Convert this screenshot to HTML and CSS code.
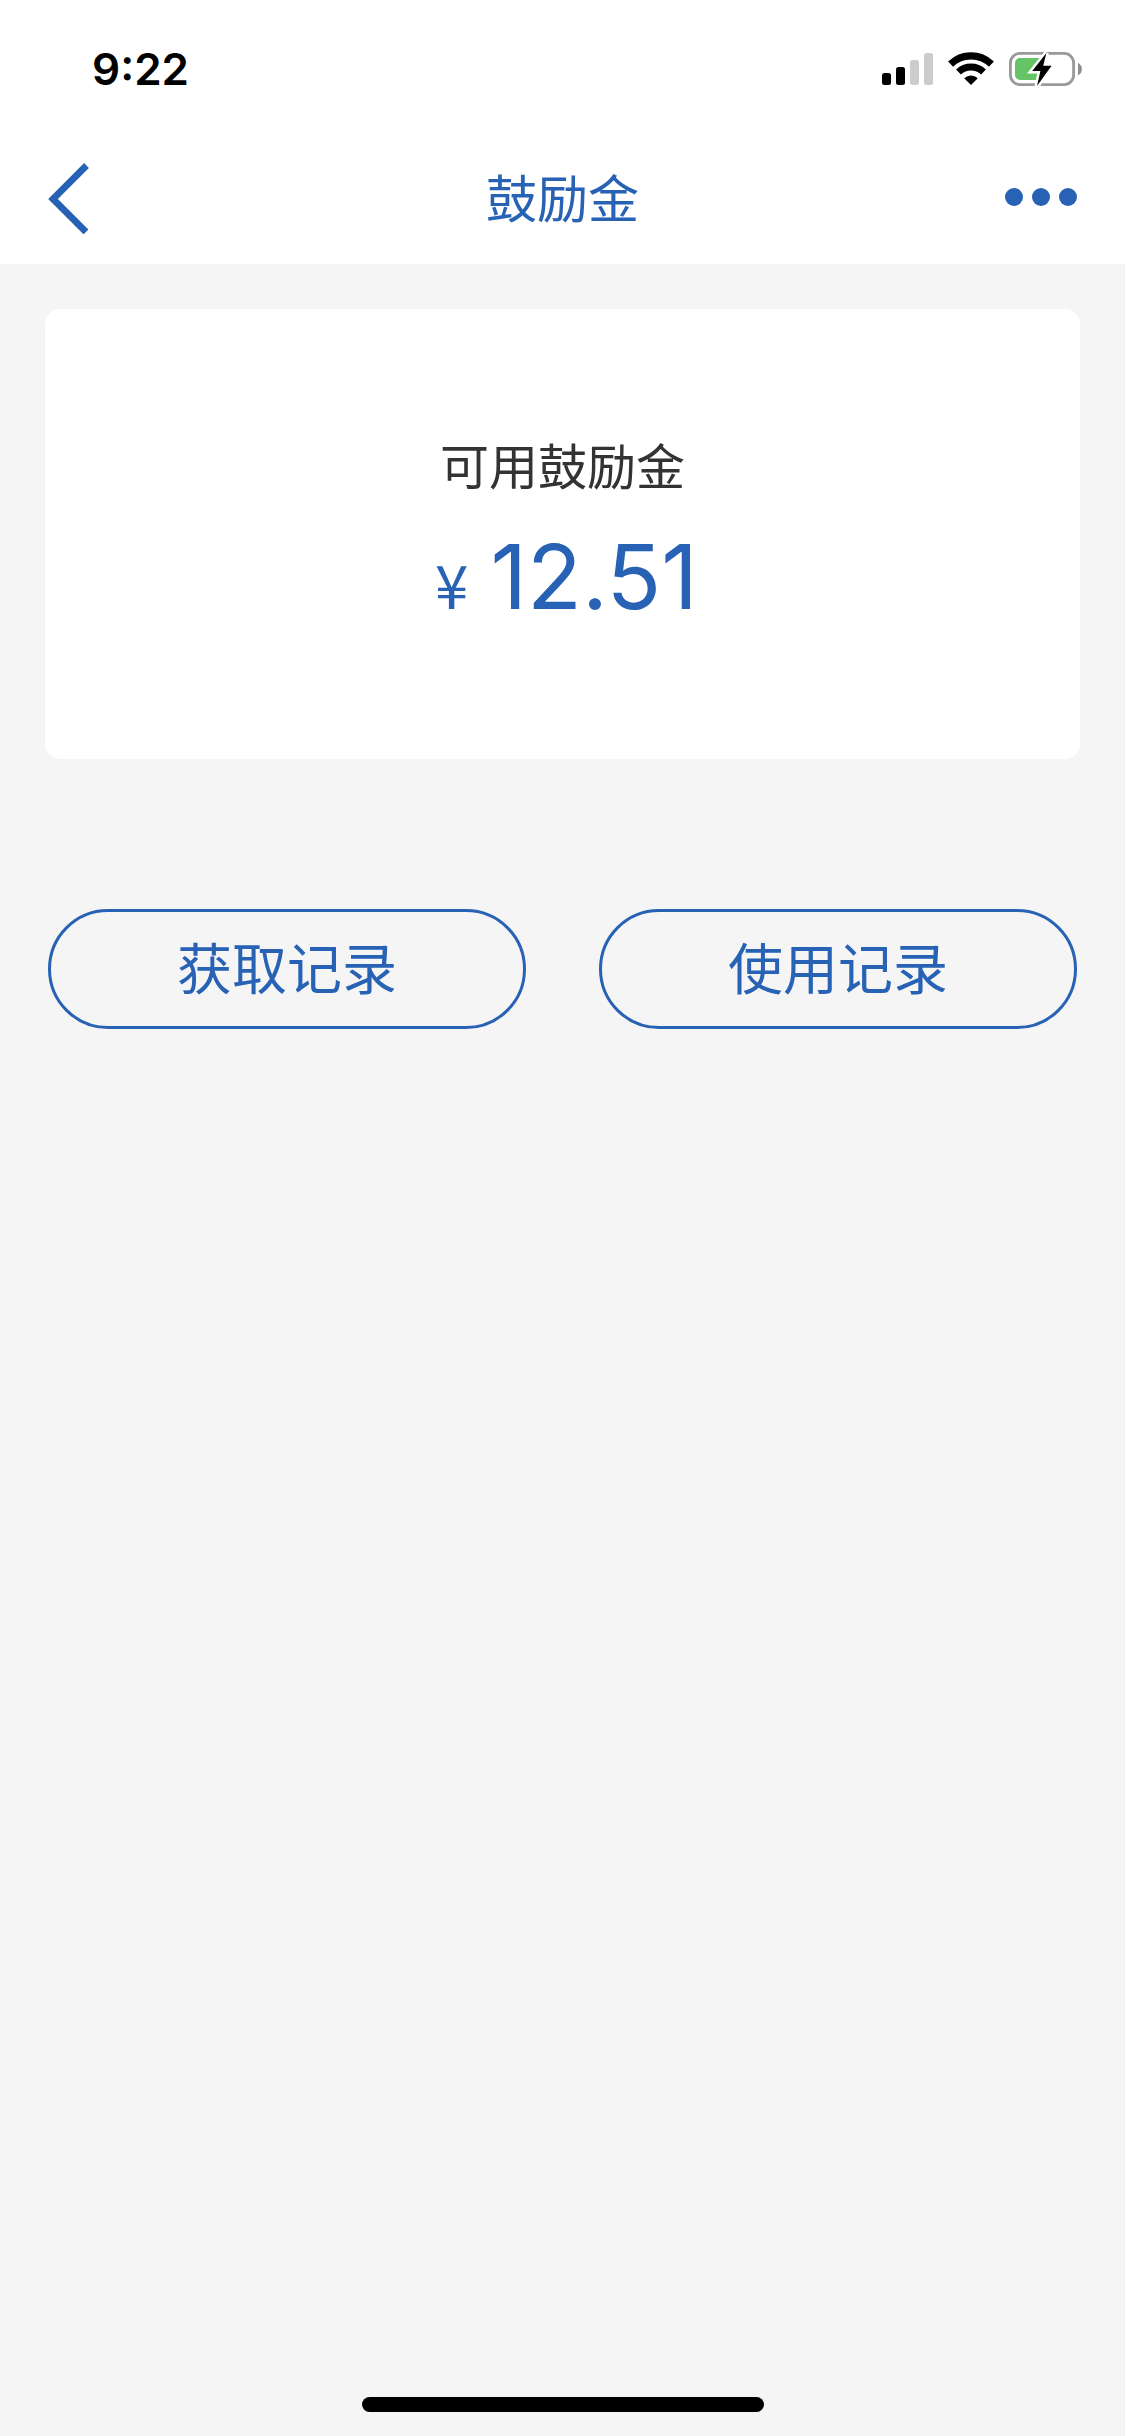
FILE: index.html
```html
<!DOCTYPE html>
<html lang="zh-CN">
<head>
    <meta charset="UTF-8">
    <meta name="viewport" content="width=device-width, initial-scale=1.0">
    <title>鼓励金</title>
    <link rel="stylesheet" href="styles.css">
</head>
<body>
    <div class="status-bar">
        <span class="time">9:22</span>
        <div class="status-icons">
            <svg width="51" height="34" viewBox="0 0 51 34" aria-hidden="true">
                <rect x="0" y="21" width="9" height="12" rx="2.5"/>
                <rect x="14" y="15" width="9" height="18" rx="2.5"/>
                <rect x="28" y="8" width="9" height="25" rx="2.5" fill="#ccc"/>
                <rect x="42" y="1" width="9" height="32" rx="2.5" fill="#ccc"/>
            </svg>
            <svg width="46" height="34" viewBox="0 0 46 34" aria-hidden="true">
                <path d="M2.6 12.1a29.2 29.2 0 0 1 40.8 0" fill="none" stroke="#000" stroke-width="7.2"/>
                <path d="M10.5 20a18.2 18.2 0 0 1 25 0" fill="none" stroke="#000" stroke-width="7"/>
                <path d="M23 33l-6.8-6.8a10.2 10.2 0 0 1 13.6 0z"/>
            </svg>
            <svg width="73" height="34" viewBox="0 0 73 34" aria-hidden="true">
                <path d="M11 6h22v22H11a5 5 0 0 1-5-5V11a5 5 0 0 1 5-5z" fill="#65c466"/>
                <rect x="1.4" y="1.4" width="63.2" height="31.2" rx="9.5" fill="none" stroke="#999" stroke-width="2.8"/>
                <path d="M37.4 1L23.2 19h8.2L28 34l14.6-20.3h-8.4z" stroke="#fff" stroke-width="5"/>
                <path d="M37.4 1L23.2 19h8.2L28 34l14.6-20.3h-8.4z"/>
                <path d="M69 10.7c5.2 2.4 5.2 10.2 0 12.6z" fill="#8e8e8e"/>
            </svg>
        </div>
    </div>

    <header class="navbar">
        <button type="button" class="nav-btn" aria-label="返回">
            <svg width="42" height="72" viewBox="0 0 42 72" aria-hidden="true">
                <path d="M38.5 3.5L5 37l33 33" fill="none" stroke="currentColor" stroke-width="6.8"/>
            </svg>
        </button>
        <h1>鼓励金</h1>
        <button type="button" class="nav-btn more" aria-label="更多">
            <svg width="72" height="20" viewBox="0 0 72 20" fill="currentColor" aria-hidden="true">
                <circle cx="9" cy="9" r="9"/>
                <circle cx="36" cy="9" r="9"/>
                <circle cx="63" cy="9" r="9"/>
            </svg>
        </button>
    </header>

    <main>
        <section class="card">
            <h2>可用鼓励金</h2>
            <p class="amount"><span class="yen">¥</span>12.51</p>
        </section>
        <div class="actions">
            <button type="button" class="record-btn">获取记录</button>
            <button type="button" class="record-btn">使用记录</button>
        </div>
    </main>

    <div class="home-indicator"></div>
</body>
</html>
```

FILE: styles.css
```css
* {
    box-sizing: border-box;
}
body {
    display: flex;
    flex-direction: column;
    min-height: 100vh;
    margin: 0;
    font-family: "Noto Sans CJK SC", sans-serif;
    color: #333;
    background-color: #f5f5f5;
}
h1, h2, p {
    margin: 0;
    font-weight: 400;
}
button {
    font-family: inherit;
    color: #2862b5;
    background: none;
    cursor: pointer;
}
svg {
    display: block;
}
.status-bar {
    display: flex;
    justify-content: space-between;
    align-items: center;
    height: 132px;
    padding: 6px 43px 0 92px;
    background-color: #fff;
}
.time {
    font-family: Inter, sans-serif;
    font-size: 44px;
    font-weight: 600;
    color: #000;
}
.status-icons {
    display: flex;
    gap: 15px;
}
.navbar {
    display: grid;
    grid-template-columns: 1fr auto 1fr;
    align-items: center;
    height: 132px;
    padding: 0 48px;
    background-color: #fff;
}
.navbar h1 {
    padding-bottom: 4px;
    font-size: 51px;
    line-height: 72px;
    color: #2862b5;
}
.nav-btn {
    justify-self: start;
    padding: 0;
    border: none;
}
.nav-btn.more {
    justify-self: end;
}
.card {
    margin: 45px 45px 0;
    padding: 119px 45px;
    text-align: center;
    background-color: #fff;
    border-radius: 15px;
}
.card h2 {
    font-size: 49px;
    line-height: 72px;
}
.amount {
    padding: 13px 0 0 8px;
    font-family: Inter, sans-serif;
    font-size: 90px;
    line-height: 127px;
    color: #2862b5;
}
.yen {
    margin-right: 22px;
    font-family: "Noto Sans CJK SC", sans-serif;
    font-size: 60px;
    line-height: 1;
}
.actions {
    display: flex;
    gap: 73px;
    padding: 150px 48px;
}
.record-btn {
    flex: 1;
    height: 120px;
    padding: 0 0 8px;
    font-size: 55px;
    border: 3px solid #2862b5;
    border-radius: 60px;
}
.home-indicator {
    width: 402px;
    height: 15px;
    margin: auto auto 24px;
    background-color: #000;
    border-radius: 8px;
}
```
